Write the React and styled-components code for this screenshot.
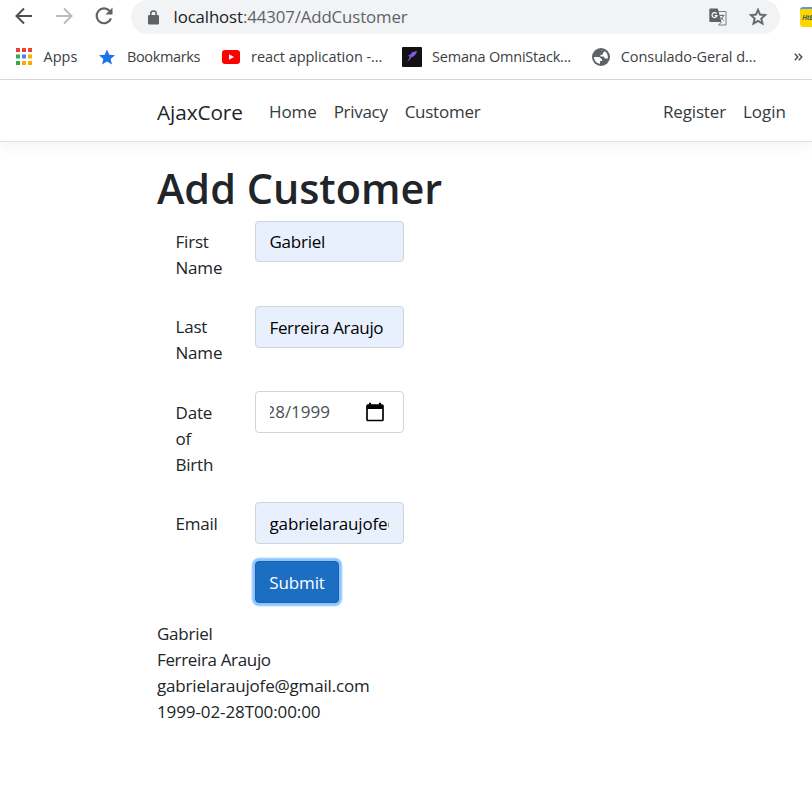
import React from "react";
import styled, { createGlobalStyle } from "styled-components";

const GlobalStyle = createGlobalStyle`
  *, *::before, *::after { box-sizing: border-box; }
  body {
    margin: 0;
    background: #fff;
    color: #212529;
    font-family: "Open Sans", "Noto Sans", sans-serif;
    font-size: 17px;
    line-height: 26px;
    overflow: hidden;
  }
`;

const Page = styled.div`
  width: 812px;
  height: 786px;
  overflow: hidden;
`;

const Text = styled.span`
  letter-spacing: ${(p) => p.$track || 0}px;
  white-space: nowrap;
`;

const Chrome = styled.header`
  height: 80px;
  border-bottom: 1px solid #dadada;
`;

const Toolbar = styled.div`
  display: flex;
  align-items: center;
  height: 34px;
  padding-left: 14px;
`;

const NavButtons = styled.div`
  display: flex;
  flex: none;
  gap: 20px;
  width: 117px;
  padding-bottom: 2px;
`;

const Icon = styled.svg`
  display: block;
  flex: none;
`;

const AddressBar = styled.div`
  display: flex;
  align-items: center;
  flex: none;
  width: 649px;
  height: 34px;
  padding: 0 13px 0 17px;
  border-radius: 17px;
  background: #f1f3f4;
`;

const Url = styled.div`
  flex: 1;
  padding-left: 14.5px;
  color: #202124;
  font-size: 16.8px;
  letter-spacing: -0.1px;
`;

const Port = styled.span`
  color: #5f6368;
`;

const AddressActions = styled.div`
  display: flex;
  align-items: center;
  gap: 22px;
`;

const Extension = styled.div`
  flex: none;
  width: 26px;
  height: 20px;
  margin-left: 20px;
  padding-left: 2px;
  border-top: 2px solid #5b9bd5;
  border-radius: 3px;
  background: #ffd500;
  color: #4b6b50;
  font: italic bold 7.5px/17px "Open Sans", sans-serif;
  letter-spacing: -0.6px;
`;

const Bookmarks = styled.nav`
  display: flex;
  align-items: center;
  height: 45px;
  padding-left: 14px;
`;

const Bookmark = styled.div`
  display: flex;
  align-items: center;
  flex: none;
  gap: ${(p) => p.$gap}px;
  width: ${(p) => p.$width}px;
  color: #3c4043;
  font-size: 14.5px;
`;

const SiteNav = styled.nav`
  display: flex;
  align-items: center;
  height: 62px;
  padding: 3px 26px 0 157px;
  border-bottom: 1px solid #dee2e6;
  box-shadow: 0 4px 13px rgba(0, 0, 0, 0.05);
`;

const Brand = styled.div`
  width: 112px;
  font-size: 20.8px;
  letter-spacing: -0.1px;
`;

const Links = styled.div`
  display: flex;
  gap: 17px;
  flex: ${(p) => (p.$grow ? 1 : "none")};
  color: #343a40;
`;

const Main = styled.main`
  padding: 19px 0 0 157px;
`;

const Title = styled.h1`
  margin: 0;
  height: 60px;
  font-size: 41.4px;
  font-weight: 600;
  line-height: 54px;
`;

const FieldRow = styled.div`
  display: grid;
  grid-template-columns: 98px 149px;
  align-items: start;
  height: ${(p) => p.$height}px;
`;

const Label = styled.label`
  width: 72px;
  padding: ${(p) => p.$top || 8}px 0 0 18.5px;
  letter-spacing: -0.2px;
`;

const Control = styled.div`
  display: flex;
  align-items: center;
  height: ${(p) => p.$height || 42}px;
  padding: ${(p) => (p.$filled ? "1px 14px 0 13.5px" : "0 14px")};
  border: 1px solid #ced4da;
  border-radius: 4px;
  background: ${(p) => (p.$filled ? "#e8f0fe" : "#fff")};
  color: ${(p) => (p.$filled ? "#000" : "#495057")};
`;

const ControlText = styled.div`
  display: flex;
  justify-content: ${(p) => (p.$end ? "flex-end" : "flex-start")};
  width: ${(p) => (p.$end ? "60px" : "100%")};
  margin-right: ${(p) => (p.$end ? 36 : 0)}px;
  overflow: hidden;
  flex: none;
`;

const Submit = styled.button`
  width: 84px;
  height: 42px;
  margin-left: 98px;
  padding: 1px 0 0;
  border: 1px solid #1861ac;
  border-radius: 4px;
  background: #1b6ec2;
  box-shadow: 0 0 0 2.500px #8ec5ff, 0 0 0 3.500px #bfdeff;
  color: #fff;
  font: inherit;
  letter-spacing: -0.1px;
`;

const Result = styled.div`
  display: flex;
  flex-direction: column;
  margin-top: 18px;
`;

const appColors = ["#ea4335", "#ea4335", "#ea4335", "#34a853", "#4285f4", "#f9ab00", "#34a853", "#f9ab00", "#f9ab00"];

const BackIcon = () => (
  <Icon width="20" height="20" viewBox="0 0 20 20" fill="none" stroke="#4d5156" strokeWidth="2">
    <path d="M18 10H3M10 2.500 2.500 10l7.500 7.500" />
  </Icon>
);
const ForwardIcon = () => (
  <Icon width="20" height="20" viewBox="0 0 20 20" fill="none" stroke="#babcbe" strokeWidth="2">
    <path d="M2 10h15M10 2.500 17.500 10 10 17.500" />
  </Icon>
);
const ReloadIcon = () => (
  <Icon width="20" height="20" viewBox="0 0 20 20">
    <path d="M15.600 4.900A7.400 7.400 0 1 0 17 12.400" fill="none" stroke="#5f6368" strokeWidth="2.200" />
    <path d="M18.500 1.500v7h-7z" fill="#5f6368" />
  </Icon>
);
const LockIcon = () => (
  <Icon width="11" height="15" viewBox="0 0 11 15">
    <path d="M2.800 6V3.700a2.700 2.700 0 0 1 5.400 0V6" fill="none" stroke="#5f6368" strokeWidth="1.500" />
    <rect y="5" width="11" height="9.500" rx="1.300" fill="#5f6368" />
  </Icon>
);
const TranslateIcon = () => (
  <Icon width="18" height="18" viewBox="0 0 18 18">
    <path d="M9 3.500h8v13.500H9.500" fill="#f1f3f4" stroke="#7c8084" strokeWidth="1" />
    <path d="M1.500.500h7.200L12.500 14H1.500A1.200 1.200 0 0 1 .3 12.800V1.700A1.200 1.200 0 0 1 1.500.500z" fill="#5f6368" />
    <path d="M7.600 5.600a2.500 2.500 0 1 0 .4 2H5.600" fill="none" stroke="#fff" strokeWidth="1.200" />
    <path d="M10.500 7.500h5M13 6.500v1M14.500 7.500c-.5 2-1.800 3.700-3 4.600M11.500 9l3.300 3.700M9.500 17l3-3" fill="none" stroke="#6d7175" strokeWidth="1" />
  </Icon>
);
const StarOutline = () => (
  <Icon width="18" height="18" viewBox="2 2 20 20" fill="#5f6368" stroke="#5f6368" strokeWidth=".5">
    <path d="M22 9.240l-7.190-.62L12 2 9.190 8.630 2 9.240l5.460 4.730L5.820 21 12 17.270 18.180 21l-1.630-7.030L22 9.240zM12 15.400l-3.760 2.270 1-4.280-3.320-2.880 4.380-.38L12 6.100l1.710 4.040 4.380.38-3.320 2.880 1 4.280L12 15.400z" />
  </Icon>
);
const AppsIcon = () => (
  <Icon width="18" height="18" viewBox="0 0 18 18">
    {appColors.map((c, i) => (
      <rect key={i} x={2 + (i % 3) * 6} y={Math.floor(i / 3) * 6.500} width="4" height="4" fill={c} />
    ))}
  </Icon>
);
const StarIcon = () => (
  <Icon width="16" height="16" viewBox="2 2 20 19" fill="#1a73e8">
    <path d="M12 17.270 18.180 21l-1.640-7.030L22 9.240l-7.190-.61L12 2 9.190 8.630 2 9.240l5.460 4.730L5.820 21z" />
  </Icon>
);
const VideoIcon = () => (
  <Icon width="18" height="14" viewBox="0 0 18 14">
    <rect width="18" height="14" rx="3" fill="#f00" />
    <path d="m7 4.200 5 2.800-5 2.800z" fill="#fff" />
  </Icon>
);
const RocketIcon = () => (
  <Icon width="20" height="20" viewBox="0 0 20 20">
    <rect width="20" height="20" rx="1" fill="#121214" />
    <path d="M15 4C12 4.300 9 5.500 8 8L5.700 8.600l2 1.200-.7 2L5 15.300l3.600-3.500.6-1.500 1.500-.2C13 8.600 14.500 6.500 15 4z" fill="#8257e5" />
  </Icon>
);
const GlobeIcon = () => (
  <Icon width="18" height="18" viewBox="0 0 18 18">
    <circle cx="9" cy="9" r="9" fill="#5f6368" />
    <path d="M2 9h4.500c2 0 2 2 3.500 2v2H8v2.800C4.500 15.500 2 12.500 2 9zM8.500 2c2 0 3.500.5 4.500 1.600L11 4.500v1.800L8.500 7v1.500h3l1.500 2h2.800C16.500 5.500 13 2 8.500 2z" fill="#fff" />
  </Icon>
);
const CalendarIcon = () => (
  <Icon width="18" height="20" viewBox="0 0 18 20">
    <path d="M2 3h14a1 1 0 0 1 1 1v13.500a1 1 0 0 1-1 1H2a1 1 0 0 1-1-1V4a1 1 0 0 1 1-1z" fill="none" stroke="#000" strokeWidth="1.700" />
    <path d="M1 3h16v4H1zM3 .8h2V4H3zM13 .8h2V4h-2z" />
  </Icon>
);
const MoreIcon = () => (
  <Icon width="9" height="8" viewBox="0 0 9 8" fill="none" stroke="#4d5156" strokeWidth="1.500">
    <path d="m.8.800 3 3.200-3 3.200M4.800.8l3 3.200-3 3.200" />
  </Icon>
);

const bookmarks = [
  { icon: <AppsIcon />, label: "Apps", gap: 11.500, width: 85, track: 0 },
  { icon: <StarIcon />, label: "Bookmarks", gap: 12, width: 123, track: -0.37 },
  { icon: <VideoIcon />, label: "react application -...", gap: 11, width: 180, track: -0.05 },
  { icon: <RocketIcon />, label: "Semana OmniStack...", gap: 10, width: 190, track: -0.2 },
  { icon: <GlobeIcon />, label: "Consulado-Geral d...", gap: 10.800, width: 202, track: -0.08 },
];

export default function App() {
  return (
    <Page>
      <GlobalStyle />
      <Chrome>
        <Toolbar>
          <NavButtons>
            <BackIcon />
            <ForwardIcon />
            <ReloadIcon />
          </NavButtons>
          <AddressBar>
            <LockIcon />
            <Url>localhost<Port>:44307/AddCustomer</Port></Url>
            <AddressActions>
              <TranslateIcon />
              <StarOutline />
            </AddressActions>
          </AddressBar>
          <Extension>HtE</Extension>
        </Toolbar>
        <Bookmarks>
          {bookmarks.map((b) => (
            <Bookmark key={b.label} $gap={b.gap} $width={b.width}>
              {b.icon}
              <Text $track={b.track}>{b.label}</Text>
            </Bookmark>
          ))}
          <MoreIcon />
        </Bookmarks>
      </Chrome>
      <SiteNav>
        <Brand>AjaxCore</Brand>
        <Links $grow>
          <Text $track={-0.100}>Home</Text>
          <Text $track={-0.300}>Privacy</Text>
          <Text $track={-0.250}>Customer</Text>
        </Links>
        <Links>
          <Text $track={-0.150}>Register</Text>
          <Text>Login</Text>
        </Links>
      </SiteNav>
      <Main>
        <Title>Add Customer</Title>
        <FieldRow $height={85}>
          <Label>First Name</Label>
          <Control $filled $height={41}><ControlText><Text $track={-0.250}>Gabriel</Text></ControlText></Control>
        </FieldRow>
        <FieldRow $height={85}>
          <Label>Last Name</Label>
          <Control $filled><ControlText><Text $track={-0.350}>Ferreira Araujo</Text></ControlText></Control>
        </FieldRow>
        <FieldRow $height={111}>
          <Label $top={9}>Date of Birth</Label>
          <Control>
            <ControlText $end><Text>02/28/1999</Text></ControlText>
            <CalendarIcon />
          </Control>
        </FieldRow>
        <FieldRow $height={59}>
          <Label $top={9}>Email</Label>
          <Control $filled><ControlText><Text $track={-0.150}>gabrielaraujofe@gmail.com</Text></ControlText></Control>
        </FieldRow>
        <Submit type="button">Submit</Submit>
        <Result>
          <Text $track={-0.250}>Gabriel</Text>
          <Text $track={-0.350}>Ferreira Araujo</Text>
          <Text $track={-0.180}>gabrielaraujofe@gmail.com</Text>
          <Text $track={-0.100}>1999-02-28T00:00:00</Text>
        </Result>
      </Main>
    </Page>
  );
}
